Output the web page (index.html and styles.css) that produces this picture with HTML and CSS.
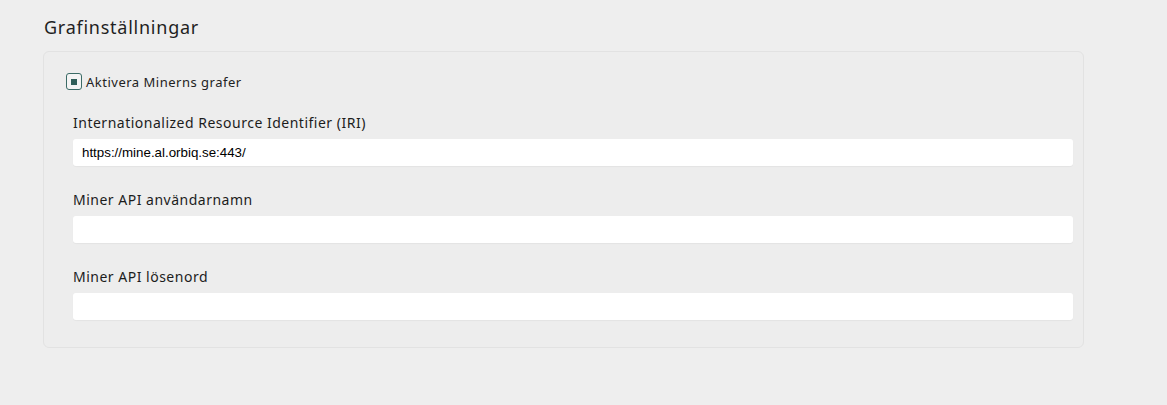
FILE: index.html
```html
<!DOCTYPE html>
<html lang="sv">
<head>
<meta charset="utf-8">
<title>Grafinställningar</title>
<link rel="stylesheet" href="styles.css">
</head>
<body>
<main class="page">
  <h2 class="title">Grafinställningar</h2>
  <section class="card">
    <label class="check">
      <span class="box"><span class="mark"></span></span>
      <span class="check-text">Aktivera Minerns grafer</span>
    </label>
    <div class="field">
      <label class="label">Internationalized Resource Identifier (IRI)</label>
      <input class="input" type="text" value="https://mine.al.orbiq.se:443/">
    </div>
    <div class="field">
      <label class="label">Miner API användarnamn</label>
      <input class="input" type="text" value="">
    </div>
    <div class="field">
      <label class="label">Miner API lösenord</label>
      <input class="input" type="text" value="">
    </div>
  </section>
</main>
</body>
</html>
```
FILE: styles.css
```css
html, body {
  margin: 0;
  background: #eeeeee;
}
body {
  font-family: "Noto Sans", "DejaVu Sans", sans-serif;
  color: #222222;
}
.page {
  padding: 15px 0 0 43px;
}
.title {
  margin: 0 0 12px 1px;
  font-size: 18px;
  font-weight: 400;
  line-height: 24px;
  letter-spacing: 0.75px;
  color: #1f1f1f;
}
.card {
  box-sizing: border-box;
  width: 1041px;
  border: 1px solid #e2e2e2;
  border-radius: 6px;
  background: #ededed;
  padding: 21px 10px 27px 22px;
}
.check {
  display: flex;
  align-items: center;
  gap: 4px;
  height: 17px;
  font-size: 13px;
  letter-spacing: 0.5px;
  color: #222;
}
.box {
  box-sizing: border-box;
  width: 16px;
  height: 17px;
  border: 1.5px solid #3b6b66;
  border-radius: 3px;
  background: #f4f4f4;
  display: flex;
  align-items: center;
  justify-content: center;
}
.mark {
  width: 6px;
  height: 6px;
  background: #2f5e59;
}
.field {
  display: flex;
  flex-direction: column;
  padding-left: 7px;
  margin-top: 24px;
}
.field + .field {
  margin-top: 25px;
}
.label {
  font-size: 14px;
  font-weight: 400;
  line-height: 18px;
  margin-bottom: 7px;
  letter-spacing: 0.5px;
  color: #1c1c1c;
}
.input {
  box-sizing: border-box;
  height: 27px;
  border: none;
  border-radius: 3px;
  background: #ffffff;
  box-shadow: 0 1px 1px rgba(0,0,0,0.04);
  padding: 0 9px;
  font-family: "Liberation Sans", Arial, sans-serif;
  font-size: 13.33px;
  letter-spacing: 0;
  color: #000;
  outline: none;
}
```
